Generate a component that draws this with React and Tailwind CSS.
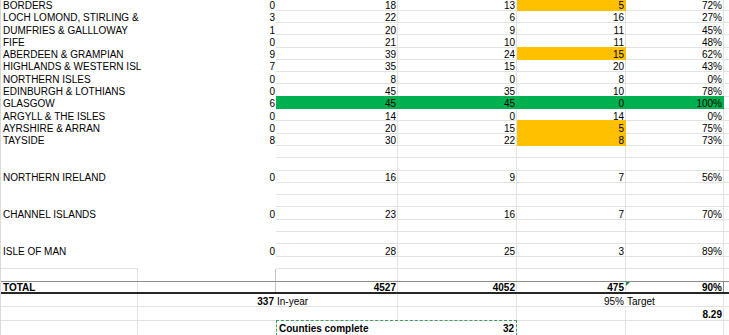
import React from "react";

const rows = [
  { name: "BORDERS", b: 0, c: 18, d: 13, e: 5, f: "72%", fill: "orange" },
  { name: "LOCH LOMOND, STIRLING &", b: 3, c: 22, d: 6, e: 16, f: "27%" },
  { name: "DUMFRIES & GALLLOWAY", b: 1, c: 20, d: 9, e: 11, f: "45%" },
  { name: "FIFE", b: 0, c: 21, d: 10, e: 11, f: "48%" },
  { name: "ABERDEEN & GRAMPIAN", b: 9, c: 39, d: 24, e: 15, f: "62%", fill: "orange" },
  { name: "HIGHLANDS & WESTERN ISL", b: 7, c: 35, d: 15, e: 20, f: "43%" },
  { name: "NORTHERN ISLES", b: 0, c: 8, d: 0, e: 8, f: "0%" },
  { name: "EDINBURGH & LOTHIANS", b: 0, c: 45, d: 35, e: 10, f: "78%" },
  { name: "GLASGOW", b: 6, c: 45, d: 45, e: 0, f: "100%", fill: "green" },
  { name: "ARGYLL & THE ISLES", b: 0, c: 14, d: 0, e: 14, f: "0%" },
  { name: "AYRSHIRE & ARRAN", b: 0, c: 20, d: 15, e: 5, f: "75%", fill: "orange" },
  { name: "TAYSIDE", b: 8, c: 30, d: 22, e: 8, f: "73%", fill: "orange" },
];

// rows between the Scottish regions and the total
const extra = [
  null,
  null,
  { name: "NORTHERN IRELAND", b: 0, c: 16, d: 9, e: 7, f: "56%" },
  null,
  null,
  { name: "CHANNEL ISLANDS", b: 0, c: 23, d: 16, e: 7, f: "70%" },
  null,
  null,
  { name: "ISLE OF MAN", b: 0, c: 28, d: 25, e: 3, f: "89%" },
];

const plain = "border-[#e3e3e3]";
const orange = "bg-[#ffc000] border-[#ffc000] shadow-[0_-1px_0_#ffc000]";
const green = "bg-[#00b050] border-[#00b050] shadow-[0_-1px_0_#00b050]";

const DataRow = ({ r }) => {
  const row = r.fill === "green" ? green : plain;
  const e = r.fill === "green" ? green : r.fill === "orange" ? orange : plain;
  return (
    <div className="flex h-[12.3px] leading-[11px]">
      <div className="w-[137px] shrink-0 pt-[1.5px] pl-[2px] whitespace-nowrap">{r.name}</div>
      <div className="w-[138px] shrink-0 pt-[1.5px] pr-[1px] text-right">{r.b}</div>
      <div className={`w-[122px] shrink-0 pt-[1.5px] pr-[1px] text-right border-r border-b ${row}`}>{r.c}</div>
      <div className={`w-[119px] shrink-0 pt-[1.5px] pr-[1px] text-right border-r border-b ${row}`}>{r.d}</div>
      <div className={`w-[109px] shrink-0 pt-[1.5px] pr-[1px] text-right border-r border-b ${e}`}>{r.e}</div>
      <div className={`w-[98px] shrink-0 pt-[1.5px] pr-[1px] text-right border-r border-b ${row}`}>{r.f}</div>
      <div className="flex-1 border-b border-[#e3e3e3]" />
    </div>
  );
};

const SpacerRow = ({ r, lineA }) => (
  <div className="flex h-[12.3px] leading-[11px]">
    <div className={`w-[137px] shrink-0 pt-[1.5px] pl-[2px] whitespace-nowrap ${lineA ? "border-b border-[#e3e3e3]" : ""}`}>
      {r && r.name}
    </div>
    <div className="w-[138px] shrink-0 pt-[1.5px] pr-[1px] text-right">{r && r.b}</div>
    <div className="w-[122px] shrink-0 pt-[1.5px] pr-[1px] text-right border-r border-b border-[#e3e3e3]">{r && r.c}</div>
    <div className="w-[119px] shrink-0 pt-[1.5px] pr-[1px] text-right border-r border-b border-[#e3e3e3]">{r && r.d}</div>
    <div className="w-[109px] shrink-0 pt-[1.5px] pr-[1px] text-right border-r border-b border-[#e3e3e3]">{r && r.e}</div>
    <div className="w-[98px] shrink-0 pt-[1.5px] pr-[1px] text-right border-r border-b border-[#e3e3e3]">{r && r.f}</div>
    <div className="flex-1 border-b border-[#e3e3e3]" />
  </div>
);

export default function App() {
  return (
    <div className="w-[729px] h-[335px] overflow-hidden bg-white text-black text-[10px] font-['Liberation_Sans',Arial,sans-serif]">
      <div className="-mt-[1.6px] border-l border-[#dadada]">
        {rows.map((r) => (
          <DataRow key={r.name} r={r} />
        ))}
        {extra.map((r, i) => (
          <SpacerRow key={i} r={r} />
        ))}
        <SpacerRow r={null} lineA />

        {/* blank row above total */}
        <div className="flex h-[12.3px]">
          <div className="w-[137px] shrink-0 border-r border-[#e3e3e3]" />
          <div className="w-[138px] shrink-0 border-r border-[#c4c4c4]" />
          <div className="w-[122px] shrink-0 border-r border-[#e3e3e3]" />
          <div className="w-[119px] shrink-0 border-r border-[#e3e3e3]" />
          <div className="w-[109px] shrink-0 border-r border-[#e3e3e3]" />
          <div className="w-[98px] shrink-0 border-r border-[#e3e3e3]" />
          <div className="flex-1" />
        </div>

        {/* total */}
        <div className="flex h-[13px] leading-[10px] font-bold border-t border-[#8c8c8c] border-b-2 border-b-[#262626]">
          <div className="w-[137px] shrink-0 pt-px pl-[2px] border-r border-[#e3e3e3]">TOTAL</div>
          <div className="w-[138px] shrink-0 border-r border-[#c4c4c4]" />
          <div className="w-[122px] shrink-0 pt-px pr-[1px] text-right border-r border-[#e3e3e3]">4527</div>
          <div className="w-[119px] shrink-0 pt-px pr-[1px] text-right border-r border-[#e3e3e3]">4052</div>
          <div className="w-[109px] shrink-0 pt-px pr-[1px] text-right border-r border-[#e3e3e3]">475</div>
          <div className="relative w-[98px] shrink-0 pt-px pr-[1px] text-right border-r border-[#8c8c8c]">
            90%
            <svg className="absolute left-0 top-0" width="4" height="4" viewBox="0 0 4 4">
              <polygon points="0,0 4,0 0,4" fill="#1e8e3e" />
            </svg>
          </div>
          <div className="flex-1" />
        </div>

        <div className="flex h-[13px] leading-[11px]">
          <div className="w-[137px] shrink-0 border-r border-b border-[#e3e3e3]" />
          <div className="w-[138px] shrink-0 pt-[2px] pr-[2px] text-right font-bold border-b border-[#e3e3e3]">337</div>
          <div className="w-[122px] shrink-0 pt-[2px] pl-[1px] border-r border-b border-[#e3e3e3]">In-year</div>
          <div className="w-[119px] shrink-0 border-r border-b border-[#e3e3e3]" />
          <div className="w-[109px] shrink-0 pt-[2px] pr-[2px] text-right border-b border-[#e3e3e3]">95%</div>
          <div className="w-[98px] shrink-0 pt-[2px] pl-[1px] border-r border-b border-[#e3e3e3]">Target</div>
          <div className="flex-1 border-b border-[#e3e3e3]" />
        </div>

        <div className="flex h-[13.4px] leading-[11px]">
          <div className="w-[137px] shrink-0 border-r border-b border-[#e3e3e3]" />
          <div className="w-[138px] shrink-0 border-b border-[#e3e3e3]" />
          <div className="w-[122px] shrink-0 border-r border-b border-[#e3e3e3]" />
          <div className="w-[119px] shrink-0 border-r border-b border-[#e3e3e3]" />
          <div className="w-[109px] shrink-0 border-r border-b border-[#e3e3e3]" />
          <div className="w-[98px] shrink-0 pt-[2px] pr-[1px] text-right font-bold border-r border-b border-[#e3e3e3]">8.29</div>
          <div className="flex-1 border-b border-[#e3e3e3]" />
        </div>

        <div className="flex h-[16px] leading-[11px] -mt-px">
          <div className="w-[137px] shrink-0 border-r border-[#e3e3e3]" />
          <div className="w-[138px] shrink-0" />
          <div className="w-[241px] shrink-0 flex justify-between pt-[2px] px-[2px] font-bold border border-dashed border-[#3f9b5e]">
            <span>Counties complete</span>
            <span>32</span>
          </div>
          <div className="w-[109px] shrink-0 border-r border-[#e3e3e3]" />
          <div className="w-[98px] shrink-0 border-r border-[#e3e3e3]" />
          <div className="flex-1" />
        </div>
      </div>
    </div>
  );
}
